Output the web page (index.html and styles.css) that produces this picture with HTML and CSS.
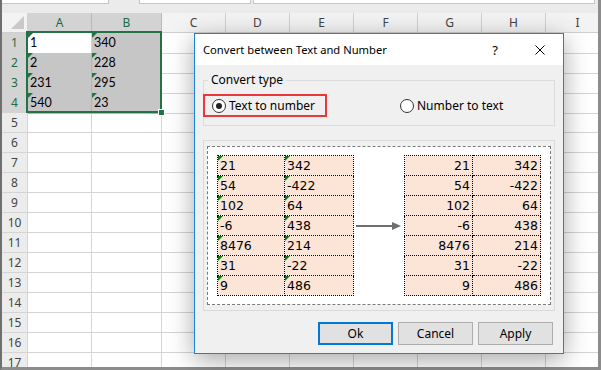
FILE: index.html
```html
<!DOCTYPE html>
<html lang="en">

<head>
	<meta charset="UTF-8">
	<meta name="viewport" content="width=device-width, initial-scale=1.0">
	<title>Convert between Text and Number</title>
	<link rel="stylesheet" href="styles.css">
</head>

<body>
	<div class="excel">
		<div class="excel__bar">
			<div class="excel__box excel__box--name"></div>
			<div class="excel__box excel__box--mid"></div>
			<div class="excel__box excel__box--formula"></div>
		</div>
		<div class="sheet" id="sheet">
			<div class="row row--head">
				<div class="corner"></div>
				<div class="col sel">A</div>
				<div class="col sel">B</div>
				<div class="col">C</div>
				<div class="col">D</div>
				<div class="col">E</div>
				<div class="col">F</div>
				<div class="col">G</div>
				<div class="col">H</div>
				<div class="col">I</div>
			</div>
			<div class="row">
				<div class="rh sel">1</div>
				<div class="cell txt">1</div>
				<div class="cell txt grey">340</div>
				<div class="cell"></div><div class="cell"></div><div class="cell"></div><div class="cell"></div>
				<div class="cell"></div><div class="cell"></div><div class="cell"></div>
			</div>
			<div class="row">
				<div class="rh sel">2</div>
				<div class="cell txt grey">2</div>
				<div class="cell txt grey">228</div>
				<div class="cell"></div><div class="cell"></div><div class="cell"></div><div class="cell"></div>
				<div class="cell"></div><div class="cell"></div><div class="cell"></div>
			</div>
			<div class="row">
				<div class="rh sel">3</div>
				<div class="cell txt grey">231</div>
				<div class="cell txt grey">295</div>
				<div class="cell"></div><div class="cell"></div><div class="cell"></div><div class="cell"></div>
				<div class="cell"></div><div class="cell"></div><div class="cell"></div>
			</div>
			<div class="row">
				<div class="rh sel">4</div>
				<div class="cell txt grey">540</div>
				<div class="cell txt grey">23</div>
				<div class="cell"></div><div class="cell"></div><div class="cell"></div><div class="cell"></div>
				<div class="cell"></div><div class="cell"></div><div class="cell"></div>
			</div>
		</div>
		<div class="selection"><span class="selection__handle"></span></div>
	</div>

	<div class="dialog">
		<div class="dialog__title">
			<span class="dialog__caption">Convert between Text and Number</span>
			<span class="dialog__help">?</span>
			<svg class="dialog__close" width="10" height="10" viewBox="0 0 10 10">
				<path d="M0.5 0.5 L9.5 9.5 M9.5 0.5 L0.5 9.5" stroke="#000" stroke-width="1" fill="none" />
			</svg>
		</div>
		<div class="dialog__body">
			<fieldset class="group">
				<legend class="group__label">Convert type</legend>
				<div class="group__row">
					<label class="radio radio--marked"><span class="radio__dot checked"></span>Text to number</label>
					<label class="radio radio--second"><span class="radio__dot"></span>Number to text</label>
				</div>
			</fieldset>

			<div class="preview">
				<div class="preview__inner">
					<table class="sample sample--text">
						<tr><td>21</td><td>342</td></tr>
						<tr><td>54</td><td>-422</td></tr>
						<tr><td>102</td><td>64</td></tr>
						<tr><td>-6</td><td>438</td></tr>
						<tr><td>8476</td><td>214</td></tr>
						<tr><td>31</td><td>-22</td></tr>
						<tr><td>9</td><td>486</td></tr>
					</table>
					<svg class="arrow" width="45" height="10" viewBox="0 0 45 10">
						<line x1="0" y1="5" x2="37" y2="5" stroke="#6e6e6e" stroke-width="2" />
						<polygon points="36,1 45,5 36,9" fill="#6e6e6e" />
					</svg>
					<table class="sample sample--num">
						<tr><td>21</td><td>342</td></tr>
						<tr><td>54</td><td>-422</td></tr>
						<tr><td>102</td><td>64</td></tr>
						<tr><td>-6</td><td>438</td></tr>
						<tr><td>8476</td><td>214</td></tr>
						<tr><td>31</td><td>-22</td></tr>
						<tr><td>9</td><td>486</td></tr>
					</table>
				</div>
			</div>

			<div class="buttons">
				<button class="btn btn--default">Ok</button>
				<button class="btn">Cancel</button>
				<button class="btn">Apply</button>
			</div>
		</div>
	</div>

	<script>
		const sheet = document.querySelector('#sheet');

		for (let r = 5; r <= 17; r++) {
			const row = document.createElement('div');
			row.classList.add('row');
			row.innerHTML = '<div class="rh">' + r + '</div>' + '<div class="cell"></div>'.repeat(9);
			sheet.appendChild(row);
		}
	</script>
</body>

</html>
```

FILE: styles.css
```css
body {
	margin: 0;
	width: 601px;
	height: 370px;
	overflow: hidden;
	position: relative;
	background: #fff;
	font-family: "Noto Sans", "Open Sans", sans-serif;
}

.excel {
	position: relative;
	width: 601px;
	height: 370px;
	box-sizing: border-box;
	border-left: 2px solid #6f6f6f;
	border-right: 3px solid #8c8c8c;
	border-bottom: 3px solid #8c8c8c;
	overflow: hidden;
	background: #fff;
}

.excel__bar {
	height: 13px;
	background: #ebebeb;
	position: relative;
}

.excel__box {
	position: absolute;
	top: 0;
	height: 3px;
	background: #fff;
	border: 1px solid #c6c6c6;
	border-top: 0;
}

.excel__box--name {
	left: -3px;
	width: 108px;
}

.excel__box--mid {
	left: 137px;
	width: 110px;
}

.excel__box--formula {
	left: 251px;
	width: 340px;
}

.row {
	display: grid;
	grid-template-columns: 26px 64px 70px repeat(7, 64px);
	height: 20px;
}

.row > div {
	box-sizing: border-box;
	border-right: 1px solid #d4d4d4;
	border-bottom: 1px solid #d4d4d4;
}

.row--head > div {
	background: #f3f3f3;
	border-color: #d0d0d0;
	font-size: 12px;
	color: #444;
	text-align: center;
	line-height: 19px;
}

.corner {
	position: relative;
}

.corner::after {
	content: "";
	position: absolute;
	right: 3px;
	bottom: 3px;
	width: 13px;
	height: 13px;
	background: #c9c9c9;
	clip-path: polygon(100% 0, 100% 100%, 0 100%);
}

.rh {
	background: #ececec;
	font-size: 12px;
	color: #444;
	text-align: center;
	line-height: 19px;
}

.row > .sel {
	background: #d3d3d3;
	color: #1d6b43;
	border-color: #b9b9b9;
}

.cell {
	font-family: "Lato", "Liberation Sans", sans-serif;
	font-size: 12.5px;
	line-height: 20px;
	padding-left: 2px;
	color: #000;
}

.row > .grey {
	background: #c6c6c6;
	border-color: #b4b4b4;
}

.txt {
	position: relative;
}

.txt::before {
	content: "";
	position: absolute;
	left: 0;
	top: 0;
	border-top: 5px solid #217346;
	border-right: 5px solid transparent;
}

.selection {
	position: absolute;
	left: 24px;
	top: 31px;
	width: 132px;
	height: 78px;
	border: 2px solid #217346;
}

.selection__handle {
	position: absolute;
	right: -5px;
	bottom: -5px;
	width: 5px;
	height: 5px;
	background: #217346;
	border: 1px solid #fff;
}

/* dialog */

.dialog {
	position: absolute;
	left: 194px;
	top: 33px;
	width: 370px;
	height: 321px;
	box-sizing: border-box;
	border: 1px solid #1883d7;
	background: #f0f0f0;
	box-shadow: 0 6px 24px rgba(0, 0, 0, .35);
	font-size: 12px;
	color: #000;
	display: flex;
	flex-direction: column;
}

.dialog__title {
	height: 31px;
	background: #fff;
	display: flex;
	align-items: center;
	padding-left: 8px;
}

.dialog__caption {
	flex: 1;
	font-size: 11.2px;
}

.dialog__help {
	width: 14px;
	text-align: center;
	margin-right: 33px;
	font-size: 13px;
}

.dialog__close {
	margin-right: 18px;
}

.dialog__body {
	padding: 8px 8px 0 8px;
}

.group {
	margin: 0;
	padding: 0 0 8px 0;
	border: 1px solid #dcdcdc;
}

.group__label {
	margin-left: 4px;
	padding: 0 3px;
	line-height: 14px;
}

.group__row {
	display: flex;
	align-items: center;
	margin-top: 7px;
}

.radio {
	display: flex;
	align-items: center;
	height: 23px;
	box-sizing: border-box;
}

.radio--marked {
	width: 124px;
	margin-left: -1px;
	border: 2px solid #e8383a;
	padding-left: 7px;
}

.radio--second {
	margin-left: 73px;
}

.radio__dot {
	width: 12px;
	height: 12px;
	border: 1px solid #333;
	border-radius: 50%;
	background: #fff;
	margin-right: 3px;
	position: relative;
}

.radio__dot.checked::after {
	content: "";
	position: absolute;
	left: 3px;
	top: 3px;
	width: 6px;
	height: 6px;
	border-radius: 50%;
	background: #222;
}

.preview {
	margin-top: 14px;
	border: 1px solid #dadada;
	padding: 5px 3px;
}

.preview__inner {
	background: #fff;
	border: 1px dashed #7a7a7a;
	padding: 8px 9px;
	display: flex;
	align-items: center;
}

.arrow {
	margin: 0 3px 0 2px;
}

.sample {
	border-collapse: collapse;
	font-family: "DejaVu Sans", sans-serif;
	font-size: 12.5px;
}

.sample td {
	border: 1px dotted #000;
	background: #fce4d6;
	height: 19px;
	padding: 0 2px;
	line-height: 19px;
	box-sizing: border-box;
	vertical-align: bottom;
}

.sample--text td:first-child {
	width: 67px;
}

.sample--text td:last-child {
	width: 69px;
}

.sample--text td {
	position: relative;
}

.sample--text td::before {
	content: "";
	position: absolute;
	left: 0;
	top: 0;
	border-top: 5px solid #0f7a0f;
	border-right: 5px solid transparent;
}

.sample--num td {
	width: 68px;
	text-align: right;
}

.buttons {
	display: flex;
	justify-content: flex-end;
	gap: 5px;
	margin-top: 11px;
	padding-right: 2px;
}

.btn {
	width: 75px;
	height: 23px;
	box-sizing: border-box;
	background: #e1e1e1;
	border: 1px solid #adadad;
	font-family: inherit;
	font-size: 12px;
	color: #000;
	padding: 0;
}

.btn--default {
	border: 2px solid #0078d7;
}
```
